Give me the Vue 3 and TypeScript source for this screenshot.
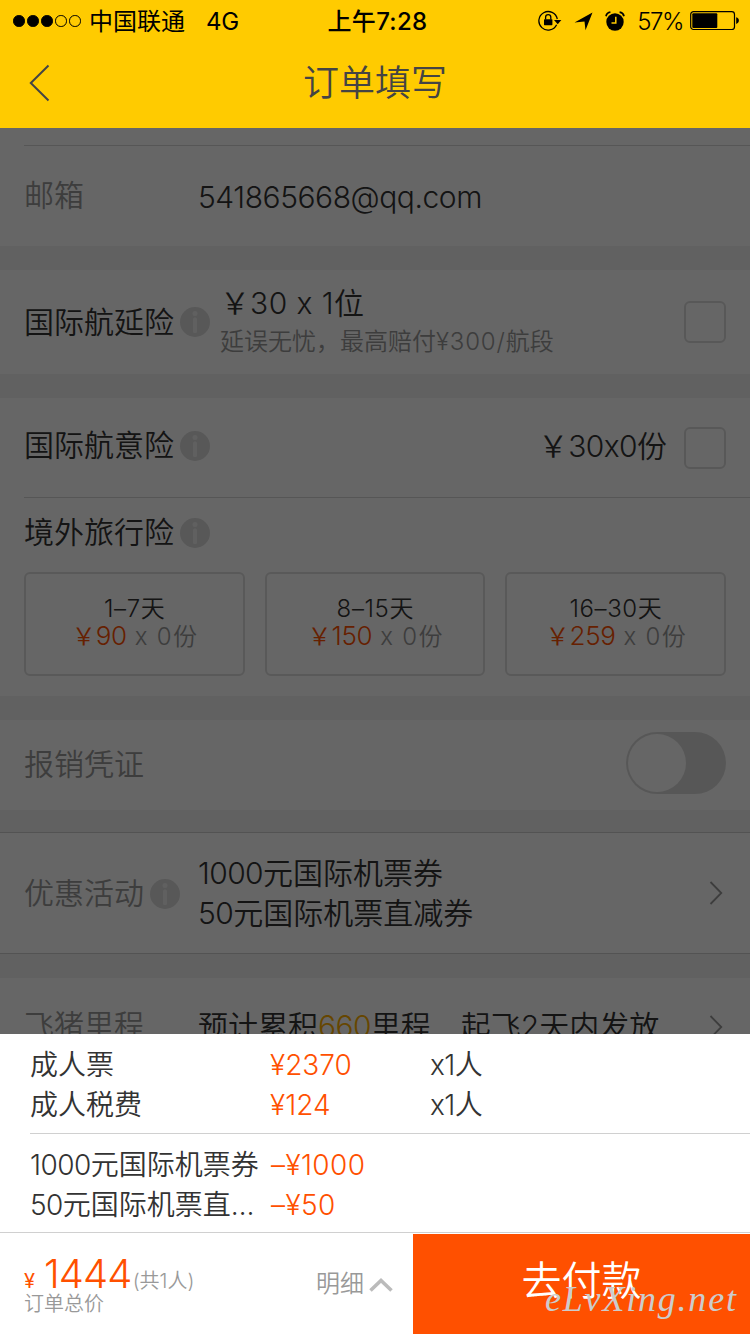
<script setup lang="ts">
interface Plan { days: string; price: string }
interface Charge { name: string; amount: string; count?: string }

const plans: Plan[] = [
  { days: '1–7', price: '90' },
  { days: '8–15', price: '150' },
  { days: '16–30', price: '259' },
]
const fares: Charge[] = [
  { name: '成人票', amount: '¥2370', count: 'x1' },
  { name: '成人税费', amount: '¥124', count: 'x1' },
]
const signals: boolean[] = [true, true, true, false, false]
</script>

<template>
  <div class="screen">
    <header class="top">
      <div class="status">
        <div class="carrier">
          <i v-for="(on, k) in signals" :key="k" class="dot" :class="{ on }"></i>
          <span class="operator">中国联通</span>
          <span class="network">4G</span>
        </div>
        <div class="clock">上午7:28</div>
        <div class="device">
          <svg class="lock" width="24" height="22" viewBox="0 0 24 22">
            <path d="M18.6 14.8A9.3 9.3 0 1 1 19.3 9" fill="none" stroke="#000" stroke-width="1.3" />
            <path d="M16 10h7.400l-3.700 4.200z" />
            <rect x="6" y="9.2" width="8.4" height="6" rx=".6" />
            <path d="M7.6 9.5V7.2a2.6 2.6 0 0 1 5.2 0v2.3" fill="none" stroke="#000" stroke-width="1.3" />
          </svg>
          <svg class="nav-arrow" width="19" height="19" viewBox="0 0 19 19"><path d="M18.500.5 11.500 18.300 10.500 9.500.5 10.500z" /></svg>
          <svg class="alarm" width="20" height="20" viewBox="0 0 20 20">
            <circle cx="10" cy="11" r="8.7" />
            <path d="M1 5.2A5.2 5.2 0 0 1 5.4 1.2M19 5.2A5.2 5.2 0 0 0 14.600 1.2" fill="none" stroke="#000" stroke-width="1.7" />
            <path d="M10.800 5.700V12H6.500" fill="none" stroke="#ffcb00" stroke-width="1.500" />
          </svg>
          <span class="percent">57%</span>
          <svg width="50" height="20" viewBox="0 0 50 20">
            <rect x=".7" y=".7" width="43.800" height="17.800" rx="2.800" fill="none" stroke="#000" stroke-width="1.200" />
            <rect x="2.300" y="2.300" width="25" height="14.600" rx="1" />
            <path d="M46.200 6.300c3.600 1 3.600 5.600 0 6.600z" />
          </svg>
        </div>
      </div>
      <div class="title-bar">
        <svg class="back" width="22" height="38" viewBox="0 0 22 38"><path d="M19.500 1.500 1.800 19l17.700 17.500" fill="none" stroke="#444" stroke-width="2" /></svg>
        <h1>订单填写</h1>
      </div>
    </header>

    <main class="order">
      <section class="row email">
        <span class="label muted">邮箱</span>
        <span class="mail">541865668@qq.com</span>
      </section>

      <section class="row delay">
        <span class="label">国际航延险</span>
        <svg class="info" viewBox="0 0 30 30"><circle cx="15" cy="15" r="15" /><circle class="mark" cx="15" cy="6.500" r="2.500" /><rect class="mark" x="13" y="10.500" width="4" height="15.500" rx="1.500" /></svg>
        <div class="offer">
          <div class="offer-price">￥<span class="n wide">30 x 1</span>位</div>
          <div class="offer-note">延误无忧，最高赔付<span class="n wide">¥300/</span>航段</div>
        </div>
        <span class="check"></span>
      </section>

      <section class="group">
        <div class="row accident">
          <span class="label">国际航意险</span>
          <svg class="info" viewBox="0 0 30 30"><circle cx="15" cy="15" r="15" /><circle class="mark" cx="15" cy="6.500" r="2.500" /><rect class="mark" x="13" y="10.500" width="4" height="15.500" rx="1.500" /></svg>
          <span class="quote">￥<span class="n">30x0</span>份</span>
          <span class="check"></span>
        </div>
        <div class="row travel">
          <span class="label">境外旅行险</span>
          <svg class="info" viewBox="0 0 30 30"><circle cx="15" cy="15" r="15" /><circle class="mark" cx="15" cy="6.500" r="2.500" /><rect class="mark" x="13" y="10.500" width="4" height="15.500" rx="1.500" /></svg>
        </div>
        <div class="plans">
          <div v-for="p in plans" :key="p.days" class="plan">
            <div><span class="days">{{ p.days }}</span>天</div>
            <div class="plan-price"><b>￥<span class="big">{{ p.price }}</span></b><span class="times"> x 0</span>份</div>
          </div>
        </div>
      </section>

      <section class="row receipt">
        <span class="label muted">报销凭证</span>
        <span class="switch"><i></i></span>
      </section>

      <section class="row promo">
        <span class="label muted">优惠活动</span>
        <svg class="info" viewBox="0 0 30 30"><circle cx="15" cy="15" r="15" /><circle class="mark" cx="15" cy="6.500" r="2.500" /><rect class="mark" x="13" y="10.500" width="4" height="15.500" rx="1.500" /></svg>
        <div class="coupons">
          <div><span class="n">1000</span>元国际机票券</div>
          <div><span class="n">50</span>元国际机票直减券</div>
        </div>
        <svg class="go" width="14" height="24" viewBox="0 0 14 24"><path d="M1.500 1 12.300 12 1.500 23" /></svg>
      </section>

      <section class="row miles">
        <span class="label muted">飞猪里程</span>
        <span class="miles-text">预计累积<em class="n">660</em>里程　起飞<span>2</span>天内发放</span>
        <svg class="go" width="14" height="24" viewBox="0 0 14 24"><path d="M1.500 1 12.300 12 1.500 23" /></svg>
      </section>
      <div class="shade"></div>
    </main>

    <section class="detail">
      <div class="charges">
        <div v-for="f in fares" :key="f.name" class="charge">
          <span>{{ f.name }}</span><span class="amount">{{ f.amount }}</span><span><span class="n">{{ f.count }}</span>人</span>
        </div>
      </div>
      <div class="charges discounts">
        <div class="charge"><span><span class="n">1000</span>元国际机票券</span><span class="amount">–¥1000</span></div>
        <div class="charge"><span><span class="n">50</span>元国际机票直<span class="dots">…</span></span><span class="amount">–¥50</span></div>
      </div>
    </section>

    <footer class="bar">
      <div class="total">
        <div class="sum"><span class="yen">¥</span><span class="figure">1444</span><span class="people">(共1人)</span></div>
        <div class="caption">订单总价</div>
      </div>
      <div class="more">明细<svg width="24" height="14" viewBox="0 0 24 14"><path d="M1.500 12.500 12 2.500l10.500 10" fill="none" stroke="#bbb" stroke-width="3.600" /></svg></div>
      <button class="pay">去付款<span class="mark-site">eLvXing.net</span></button>
    </footer>
  </div>
</template>

<style>
body { background: #fff; }
</style>

<style scoped>
.screen {
  width: 750px; height: 1334px; overflow: hidden;
  display: flex; flex-direction: column;
  font-family: Inter, "Noto Sans CJK SC", sans-serif;
  font-weight: 350; font-size: 30px; line-height: 40px; color: #333;
  white-space: nowrap;
}
.n { letter-spacing: -0.02em; }
.n.wide { letter-spacing: 0.015em; }
.top { height: 128px; flex: none; background: #ffcb00; }
.status {
  height: 40px; display: grid; grid-template-columns: 1fr auto 1fr; align-items: center;
  padding: 0 10px 0 13px; color: #000; font-size: 24px; font-weight: 400;
}
.carrier { display: flex; align-items: center; }
.dot { box-sizing: border-box; width: 11.5px; height: 11.5px; margin-right: 2.5px; border: 1px solid #000; border-radius: 50%; }
.dot.on { background: #000; }
.operator { margin-left: 6px; padding-top: 2px; }
.network { margin-left: 21px; padding-top: 2px; letter-spacing: -0.3px; }
.clock { font-weight: 500; padding: 2px 0 0 2px; letter-spacing: .3px; }
.device { display: flex; align-items: center; justify-content: flex-end; }
.nav-arrow { margin-left: 12px; }
.alarm { margin-left: 12px; }
.percent { margin: 0 7px 0 12px; padding-top: 2px; font-weight: 350; letter-spacing: -1.5px; }
.title-bar { height: 88px; display: grid; grid-template-columns: 100px 1fr 100px; align-items: start; }
.back { margin: 24px 0 0 29px; }
h1 { margin: 18px 0 0; font-size: 36px; line-height: 50px; font-weight: 350; text-align: center; color: #444; }

.order { position: relative; flex: 1; min-height: 0; overflow: hidden; padding-top: 17px; box-sizing: border-box; }
.shade { position: absolute; inset: 0; background: rgba(0, 0, 0, .6); }
.row { display: flex; align-items: flex-start; padding: 0 24px; box-sizing: border-box; }
.label { flex: none; }
.muted { color: #999; }
.info { flex: none; width: 30px; height: 30px; margin-left: 6px; fill: #dcdcdc; }
.info .mark { fill: #f0f0f0; }
.check { box-sizing: border-box; flex: none; width: 42px; height: 42px; border: 2px solid #dcdcdc; border-radius: 6px; }

.email { height: 101px; margin-left: 24px; padding-left: 0; border-top: 1px solid #d6d6d6; }
.email .label { width: 174px; margin-top: 29px; }
.mail { margin-top: 31px; letter-spacing: -0.45px; }
.delay { height: 152px; border-top: 24px solid #f2f2f2; border-bottom: 24px solid #f2f2f2; }
.delay .label { margin-top: 32px; }
.delay .info { margin-top: 37px; }
.offer { flex: 1; margin: 13px 0 0 10px; }
.offer-note { font-size: 24px; line-height: 32px; margin-top: 3px; color: #999; }
.offer-note .n.wide { letter-spacing: .035em; }
.delay .check { margin-top: 31px; }

.group { height: 298px; }
.accident { height: 100px; margin-left: 24px; padding-left: 0; border-bottom: 1px solid #d6d6d6; }
.accident .label { margin-top: 27px; }
.accident .info { margin-top: 33px; }
.quote { margin: 28px 17px 0 auto; }
.accident .check { margin-top: 29px; }
.travel { height: 74px; }
.travel .label { margin-top: 14px; }
.travel .info { margin-top: 20px; }
.plans { display: grid; grid-template-columns: repeat(3, 1fr); gap: 20px; padding: 0 24px; }
.plan { box-sizing: border-box; height: 104px; border: 2px solid #dfdfdf; border-radius: 6px; padding-top: 21px; text-align: center; font-size: 24px; line-height: 28px; }
.days { letter-spacing: .6px; }
.plan-price { color: #999; white-space: pre; margin-top: -1px; }
.plan-price b { font-weight: 350; color: #ff5000; }
.big { font-size: 26px; letter-spacing: -.4px; }
.times { letter-spacing: 1.300px; }

.receipt { height: 136px; justify-content: space-between; border-top: 24px solid #f2f2f2; border-bottom: 22px solid #f2f2f2; }
.receipt .label { margin-top: 24px; }
.switch { box-sizing: border-box; width: 100px; height: 62px; margin-top: 12px; padding: 2px; border-radius: 31px; background: #dadada; }
.switch i { display: block; width: 58px; height: 58px; border-radius: 50%; background: #fff; }
.promo { height: 122px; border-top: 1px solid #d0d0d0; border-bottom: 1px solid #d0d0d0; }
.promo .label { margin-top: 40px; }
.promo .info { margin-top: 46px; }
.coupons { margin: 20px 0 0 18px; }
.go { margin-left: auto; margin-right: 3px; fill: none; stroke: #999; stroke-width: 1.8; }
.promo .go { margin-top: 48px; }
.miles { height: 124px; border-top: 24px solid #f2f2f2; }
.miles .label { width: 174px; margin-top: 27px; }
.miles-text { margin-top: 28px; }
.miles em { font-style: normal; color: #ffb000; }
.miles .go { margin-top: 37px; }

.detail { flex: none; height: 198px; font-size: 28px; border-bottom: 1px solid #d0d0d0; background: #fff; }
.charges { margin-left: 30px; height: 88px; padding-top: 11px; border-bottom: 1px solid #d0d0d0; }
.discounts { border: 0; }
.charge { display: grid; grid-template-columns: 240px 160px 1fr; }
.amount { color: #ff5000; }
.discounts .amount { padding-left: 1px; letter-spacing: .4px; }
.dots { letter-spacing: 1px; }

.bar { flex: none; height: 101px; display: flex; background: #fff; }
.total { flex: 1; padding: 14px 0 0 24px; }
.sum { height: 45px; line-height: 54px; color: #ff5000; display: flex; align-items: baseline; }
.yen { font-size: 20px; font-weight: 400; }
.figure { font-size: 40px; margin-left: 9px; letter-spacing: -.9px; }
.people { font-size: 20px; color: #999; margin-left: 1px; }
.caption { font-size: 20px; line-height: 24px; color: #999; }
.more { display: flex; align-items: center; font-size: 24px; color: #999; margin-right: 20px; padding-top: 1px; }
.more svg { margin: 1px 0 0 5px; }
.pay { position: relative; width: 337px; height: 100px; margin-top: 1px; border: 0; padding: 0 0 6px; background: #ff5000; color: #fff; font: 350 40px/56px Inter, "Noto Sans CJK SC", sans-serif; }
.mark-site { position: absolute; left: 132px; top: 45px; font: italic 36px/40px "Liberation Serif", serif; color: #ccc; letter-spacing: 1.800px; }
</style>
